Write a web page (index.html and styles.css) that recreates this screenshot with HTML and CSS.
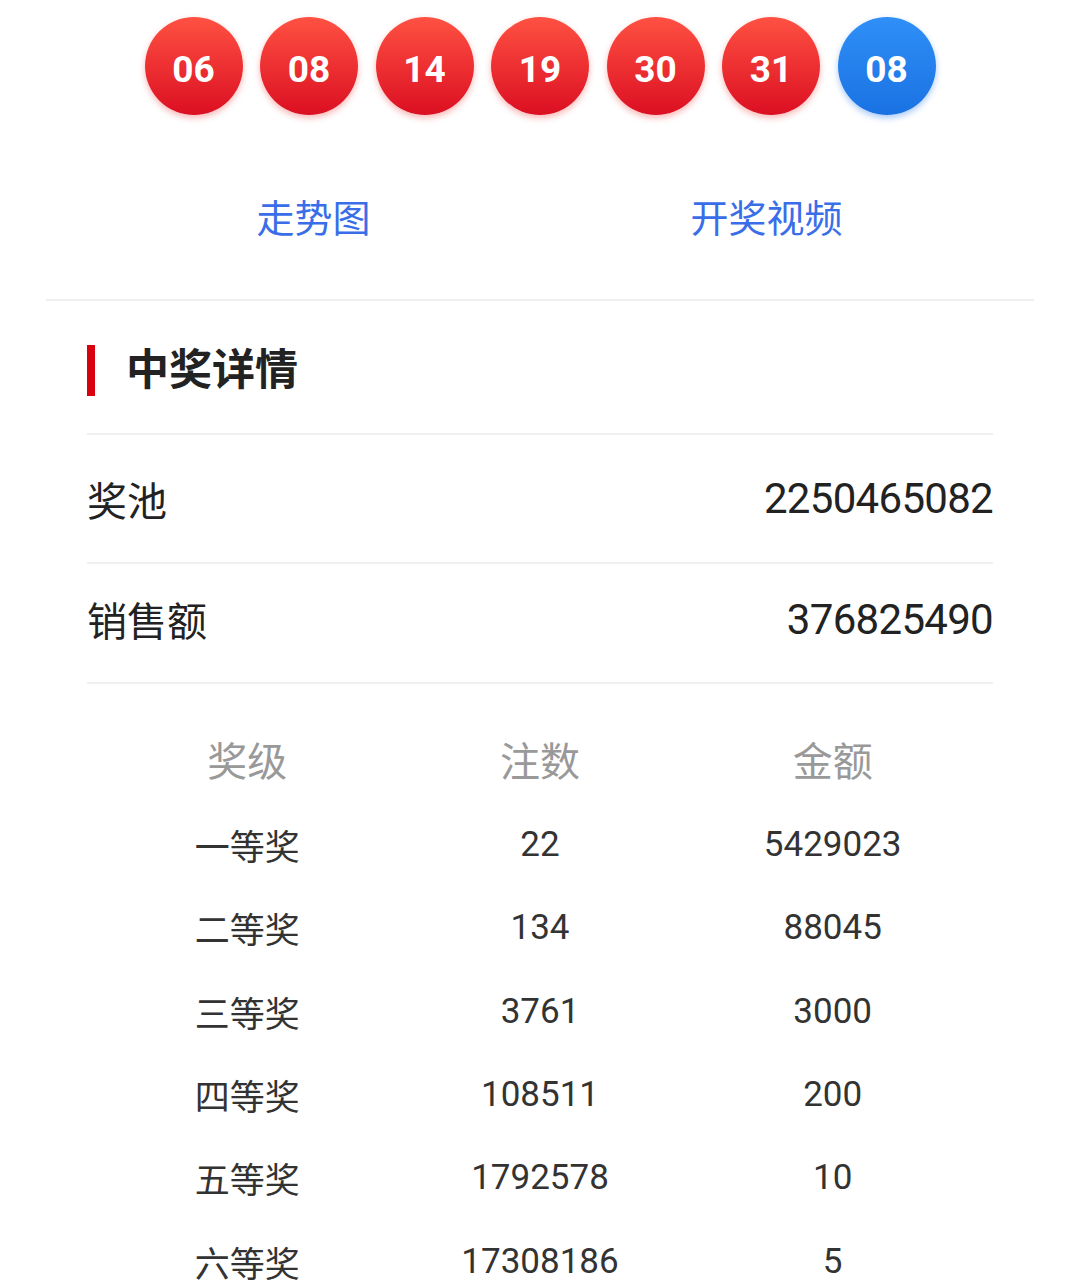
FILE: index.html
```html
<!doctype html>
<html lang="zh-CN">
  <head>
    <meta charset="utf-8" />
    <title>开奖详情</title>
    <link rel="stylesheet" href="styles.css">
  </head>

  <body>
    <div class="balls">
      <span class="ball red">06</span>
      <span class="ball red">08</span>
      <span class="ball red">14</span>
      <span class="ball red">19</span>
      <span class="ball red">30</span>
      <span class="ball red">31</span>
      <span class="ball blue">08</span>
    </div>

    <div class="links">
      <a href="#">走势图</a>
      <a href="#">开奖视频</a>
    </div>

    <div class="divider"></div>

    <div class="details">
      <h2 class="section-title">中奖详情</h2>

      <div class="info-row pool">
        <span>奖池</span>
        <span class="num">2250465082</span>
      </div>
      <div class="info-row sales">
        <span>销售额</span>
        <span class="num">376825490</span>
      </div>

      <div class="prize-table">
        <div class="prize-row head">
          <span>奖级</span><span>注数</span><span>金额</span>
        </div>
        <div class="prize-row">
          <span>一等奖</span><span>22</span><span>5429023</span>
        </div>
        <div class="prize-row">
          <span>二等奖</span><span>134</span><span>88045</span>
        </div>
        <div class="prize-row">
          <span>三等奖</span><span>3761</span><span>3000</span>
        </div>
        <div class="prize-row">
          <span>四等奖</span><span>108511</span><span>200</span>
        </div>
        <div class="prize-row">
          <span>五等奖</span><span>1792578</span><span>10</span>
        </div>
        <div class="prize-row">
          <span>六等奖</span><span>17308186</span><span>5</span>
        </div>
      </div>
    </div>
  </body>
</html>
```

FILE: styles.css
```css
body {
  margin: 0;
  background-color: #fff;
  color: #222;
  font-family: Roboto, 'Noto Sans CJK SC', sans-serif;
}

.balls {
  display: flex;
  justify-content: center;
  gap: 17.5px;
  padding: 17px 0 0 3px;
}

.ball {
  width: 98px;
  height: 98px;
  box-sizing: border-box;
  padding-top: 6px;
  border-radius: 50%;
  display: flex;
  align-items: center;
  justify-content: center;
  color: #fff;
  font-size: 37px;
  font-weight: bold;
}

.ball.red {
  background: linear-gradient(#ff5142, #db0f22);
  box-shadow: 0 3px 6px rgba(235, 50, 50, 0.35);
}

.ball.blue {
  background: linear-gradient(#2f8ff7, #1a72e2);
  box-shadow: 0 3px 6px rgba(40, 120, 240, 0.4);
}

.links {
  display: grid;
  grid-template-columns: 1fr 1fr;
  text-align: center;
  margin: 74px 84px 50px 87px;
  line-height: 60px;
}

.links a {
  color: #3a6ee8;
  font-size: 38px;
  text-decoration: none;
}

.divider {
  height: 2px;
  margin: 0 43px 0 46px;
  background-color: #f0f0f0;
}

.details {
  margin: 0 84px 0 87px;
}

.section-title {
  margin: 0;
  padding: 44px 0 37px 0;
  display: flex;
  align-items: center;
  font-size: 43px;
  line-height: 51px;
  font-weight: bold;
  color: #222;
}

.section-title::before {
  content: '';
  width: 8px;
  height: 51px;
  margin-right: 31px;
  background-color: #d9000f;
}

.info-row {
  display: flex;
  justify-content: space-between;
  align-items: center;
  box-sizing: border-box;
  border-top: 2px solid #f0f0f0;
  font-size: 40px;
  color: #222;
}

.info-row.pool {
  height: 129px;
}

.info-row.sales {
  height: 122px;
  padding-bottom: 8px;
  border-bottom: 2px solid #f0f0f0;
}

.info-row .num {
  font-size: 42px;
  letter-spacing: -0.7px;
}

.prize-table {
  padding: 31px 14px 0 14px;
}

.prize-row {
  display: grid;
  grid-template-columns: repeat(3, 1fr);
  align-items: center;
  height: 83.3px;
  text-align: center;
  font-size: 35px;
  color: #333;
}

.prize-row.head {
  height: 88px;
  font-size: 40px;
  color: #999;
}
```
